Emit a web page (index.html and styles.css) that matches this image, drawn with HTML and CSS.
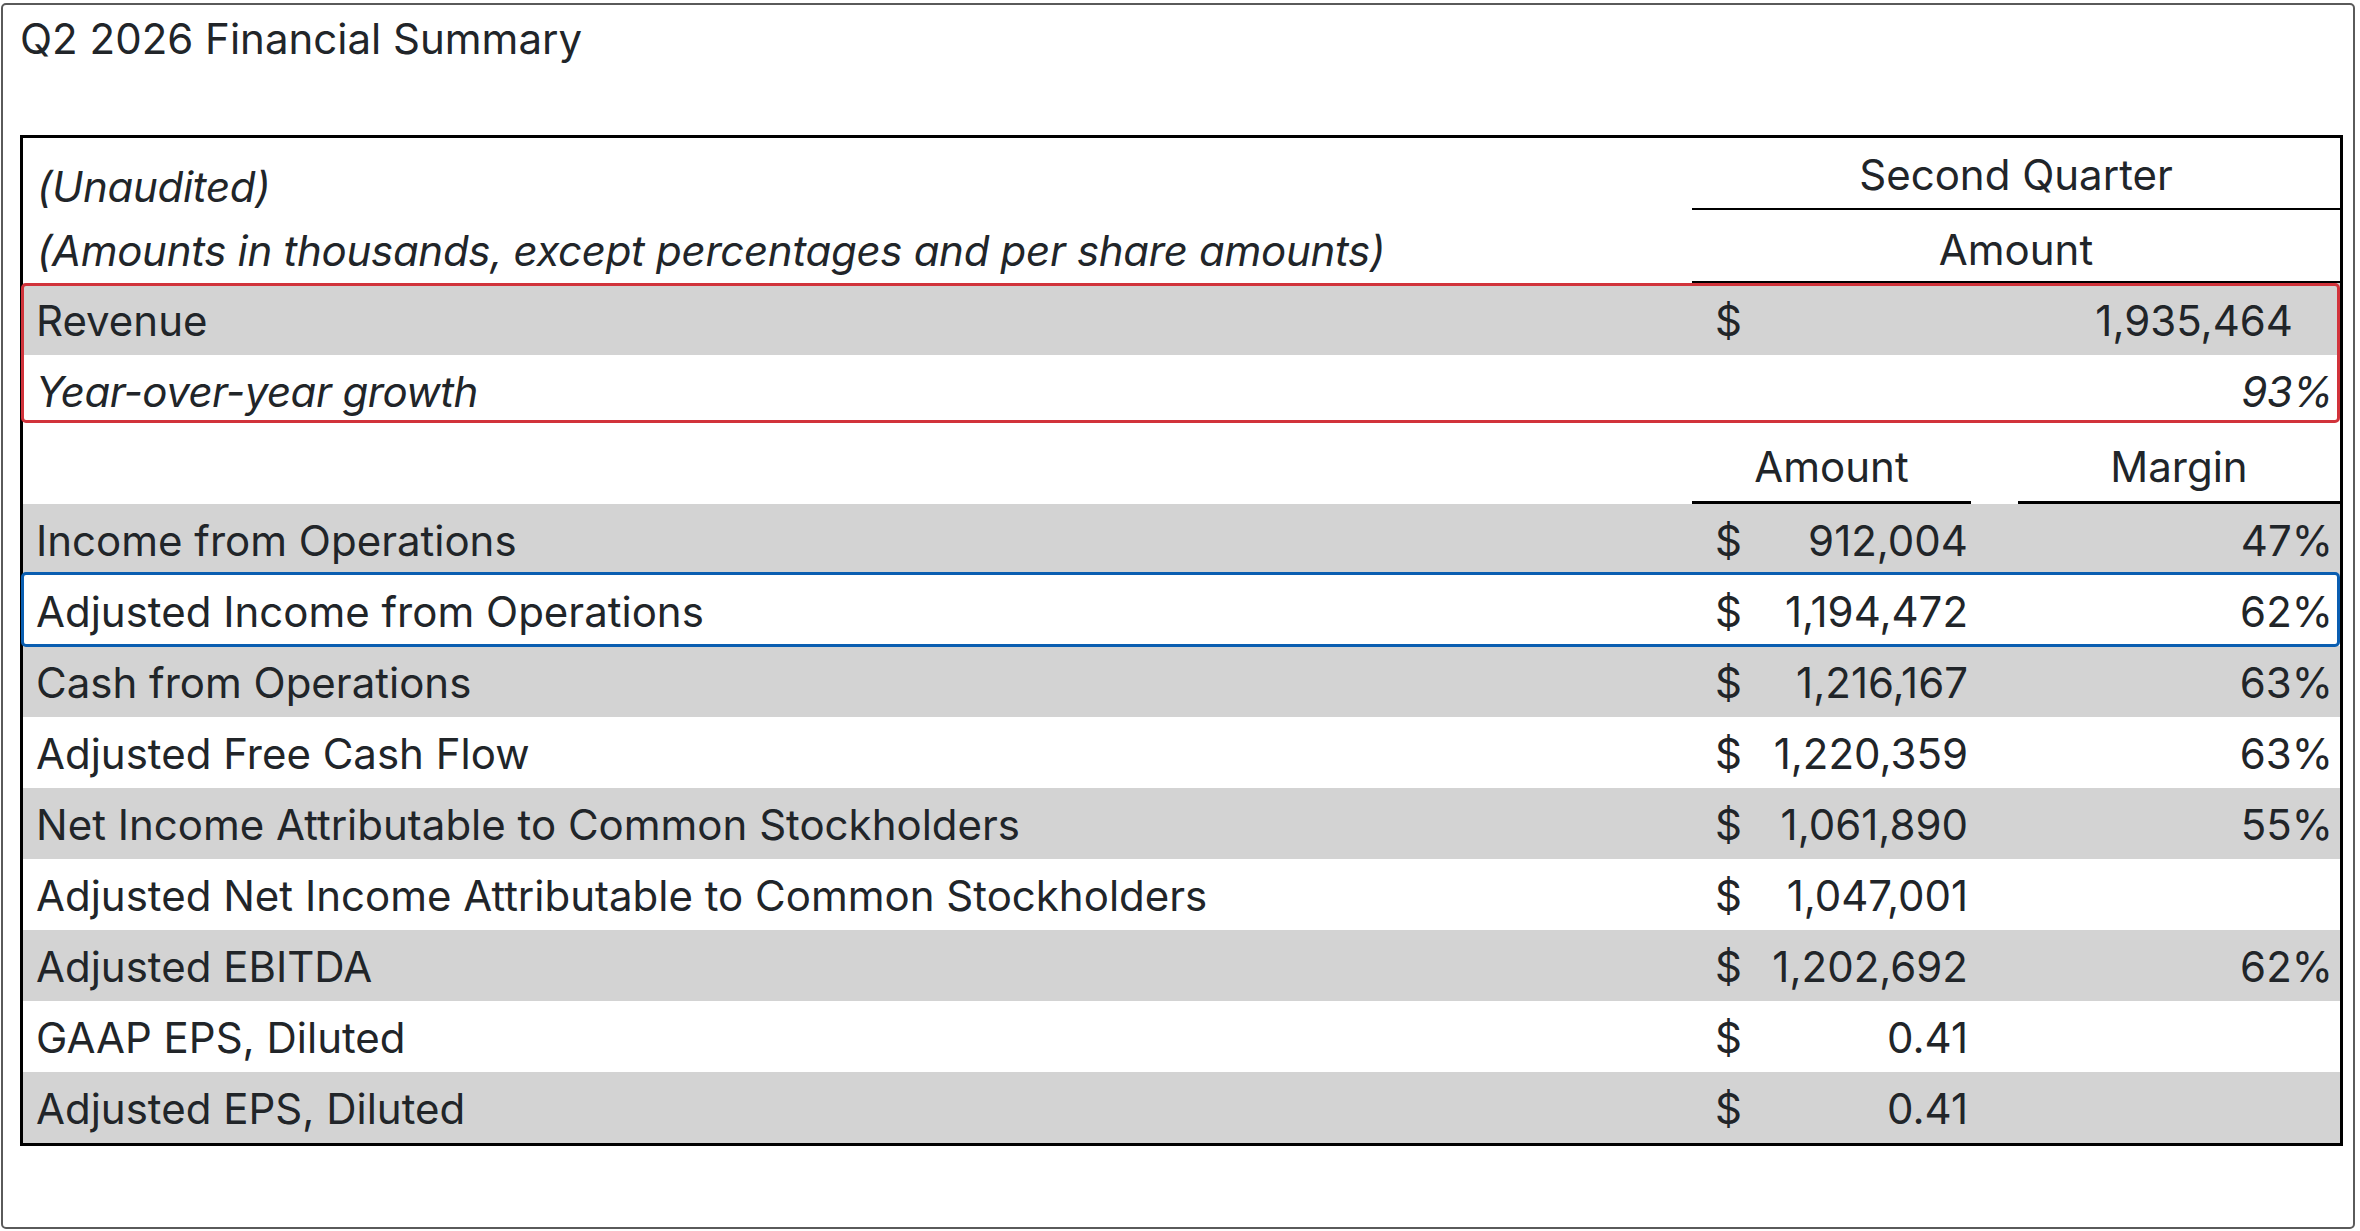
FILE: index.html
```html
<!DOCTYPE html>
<html lang="en">
<head>
<meta charset="utf-8">
<title>Q2 2026 Financial Summary</title>
<link rel="stylesheet" href="styles.css">
</head>
<body>
<div class="card">
  <h1 class="title">Q2 2026 Financial Summary</h1>
  <div class="table">
    <div class="head">
      <div class="head-left">
        <div class="note">(Unaudited)</div>
        <div class="note">(Amounts in thousands, except percentages and per share amounts)</div>
      </div>
      <div class="head-right">
        <div class="head-quarter">Second Quarter</div>
        <div class="head-amount">Amount</div>
      </div>
    </div>

    <div class="group group-red">
      <div class="row row-revenue shaded">
        <div class="label">Revenue</div>
        <div class="wide-value"><span>$</span><span>1,935,464</span></div>
      </div>
      <div class="row">
        <div class="label italic">Year-over-year growth</div>
        <div class="amount"></div>
        <div class="gap"></div>
        <div class="margin italic">93%</div>
      </div>
    </div>

    <div class="subhead">
      <div class="label"></div>
      <div class="sub-cell">Amount</div>
      <div class="gap"></div>
      <div class="sub-cell">Margin</div>
    </div>

    <div class="row shaded">
      <div class="label">Income from Operations</div>
      <div class="amount"><span>$</span><span>912,004</span></div>
      <div class="gap"></div>
      <div class="margin">47%</div>
    </div>
    <div class="group group-blue">
      <div class="row">
        <div class="label">Adjusted Income from Operations</div>
        <div class="amount"><span>$</span><span>1,194,472</span></div>
        <div class="gap"></div>
        <div class="margin">62%</div>
      </div>
    </div>
    <div class="row shaded">
      <div class="label">Cash from Operations</div>
      <div class="amount"><span>$</span><span>1,216,167</span></div>
      <div class="gap"></div>
      <div class="margin">63%</div>
    </div>
    <div class="row">
      <div class="label">Adjusted Free Cash Flow</div>
      <div class="amount"><span>$</span><span>1,220,359</span></div>
      <div class="gap"></div>
      <div class="margin">63%</div>
    </div>
    <div class="row shaded">
      <div class="label">Net Income Attributable to Common Stockholders</div>
      <div class="amount"><span>$</span><span>1,061,890</span></div>
      <div class="gap"></div>
      <div class="margin">55%</div>
    </div>
    <div class="row">
      <div class="label">Adjusted Net Income Attributable to Common Stockholders</div>
      <div class="amount"><span>$</span><span>1,047,001</span></div>
      <div class="gap"></div>
      <div class="margin"></div>
    </div>
    <div class="row shaded">
      <div class="label">Adjusted EBITDA</div>
      <div class="amount"><span>$</span><span>1,202,692</span></div>
      <div class="gap"></div>
      <div class="margin">62%</div>
    </div>
    <div class="row">
      <div class="label">GAAP EPS, Diluted</div>
      <div class="amount"><span>$</span><span>0.41</span></div>
      <div class="gap"></div>
      <div class="margin"></div>
    </div>
    <div class="row shaded">
      <div class="label">Adjusted EPS, Diluted</div>
      <div class="amount"><span>$</span><span>0.41</span></div>
      <div class="gap"></div>
      <div class="margin"></div>
    </div>
  </div>
</div>
</body>
</html>
```

FILE: styles.css
```css
* {
  box-sizing: border-box;
}

html, body {
  background: #ffffff;
}

body {
  margin: 3px 5px 2px 1px;
  font-family: Inter, "Noto Sans", "Liberation Sans", sans-serif;
  font-size: 42px;
  color: #212529;
}

.card {
  height: 1226px;
  border: 2px solid #5a5a5a;
  border-radius: 5px;
  padding: 6px 10px 0 17px;
}

.title {
  margin: 0;
  font-size: 42px;
  font-weight: 400;
  line-height: 56px;
}

.table {
  margin-top: 68px;
  border: 3px solid #000000;
}

.head {
  display: grid;
  grid-template-columns: 1669px 1fr;
}

.head-left {
  padding: 17px 0 0 14px;
  font-style: italic;
  letter-spacing: -0.3px;
}

.note {
  line-height: 64px;
  white-space: nowrap;
}

.head-right {
  display: flex;
  flex-direction: column;
}

.head-quarter {
  height: 72px;
  padding-top: 4px;
  line-height: 66px;
  text-align: center;
  border-bottom: 2px solid #000000;
}

.head-amount {
  height: 73px;
  padding-top: 8px;
  line-height: 63px;
  text-align: center;
  border-bottom: 2px solid #000000;
}

.group {
  position: relative;
}

.group-red::after {
  content: "";
  position: absolute;
  top: 0;
  left: -2px;
  right: 0;
  height: 134px;
  border: 3px solid #d1333b;
  border-radius: 5px;
  pointer-events: none;
}

.group-blue::after {
  content: "";
  position: absolute;
  top: -3px;
  bottom: -1px;
  left: -2px;
  right: 0;
  border: 3px solid #0a5eb1;
  border-radius: 5px;
  pointer-events: none;
}

.row {
  display: grid;
  grid-template-columns: 1669px 279px 47px 1fr;
  height: 71px;
  padding-top: 3px;
  line-height: 68px;
  white-space: nowrap;
}

.row-revenue {
  height: 72px;
  padding-top: 4px;
}

.shaded {
  background: #d3d3d3;
}

.label {
  padding-left: 13px;
}

.italic {
  font-style: italic;
  letter-spacing: -0.5px;
}

.amount {
  display: flex;
  justify-content: space-between;
  padding: 0 3px 0 23px;
}

.wide-value {
  grid-column: 2 / 5;
  display: flex;
  justify-content: space-between;
  padding: 0 47px 0 23px;
}

.margin {
  text-align: right;
  padding-right: 7px;
}

.subhead {
  display: grid;
  grid-template-columns: 1669px 279px 47px 1fr;
  height: 78px;
}

.sub-cell {
  padding-top: 7px;
  line-height: 68px;
  text-align: center;
  border-bottom: 3px solid #000000;
}
```
